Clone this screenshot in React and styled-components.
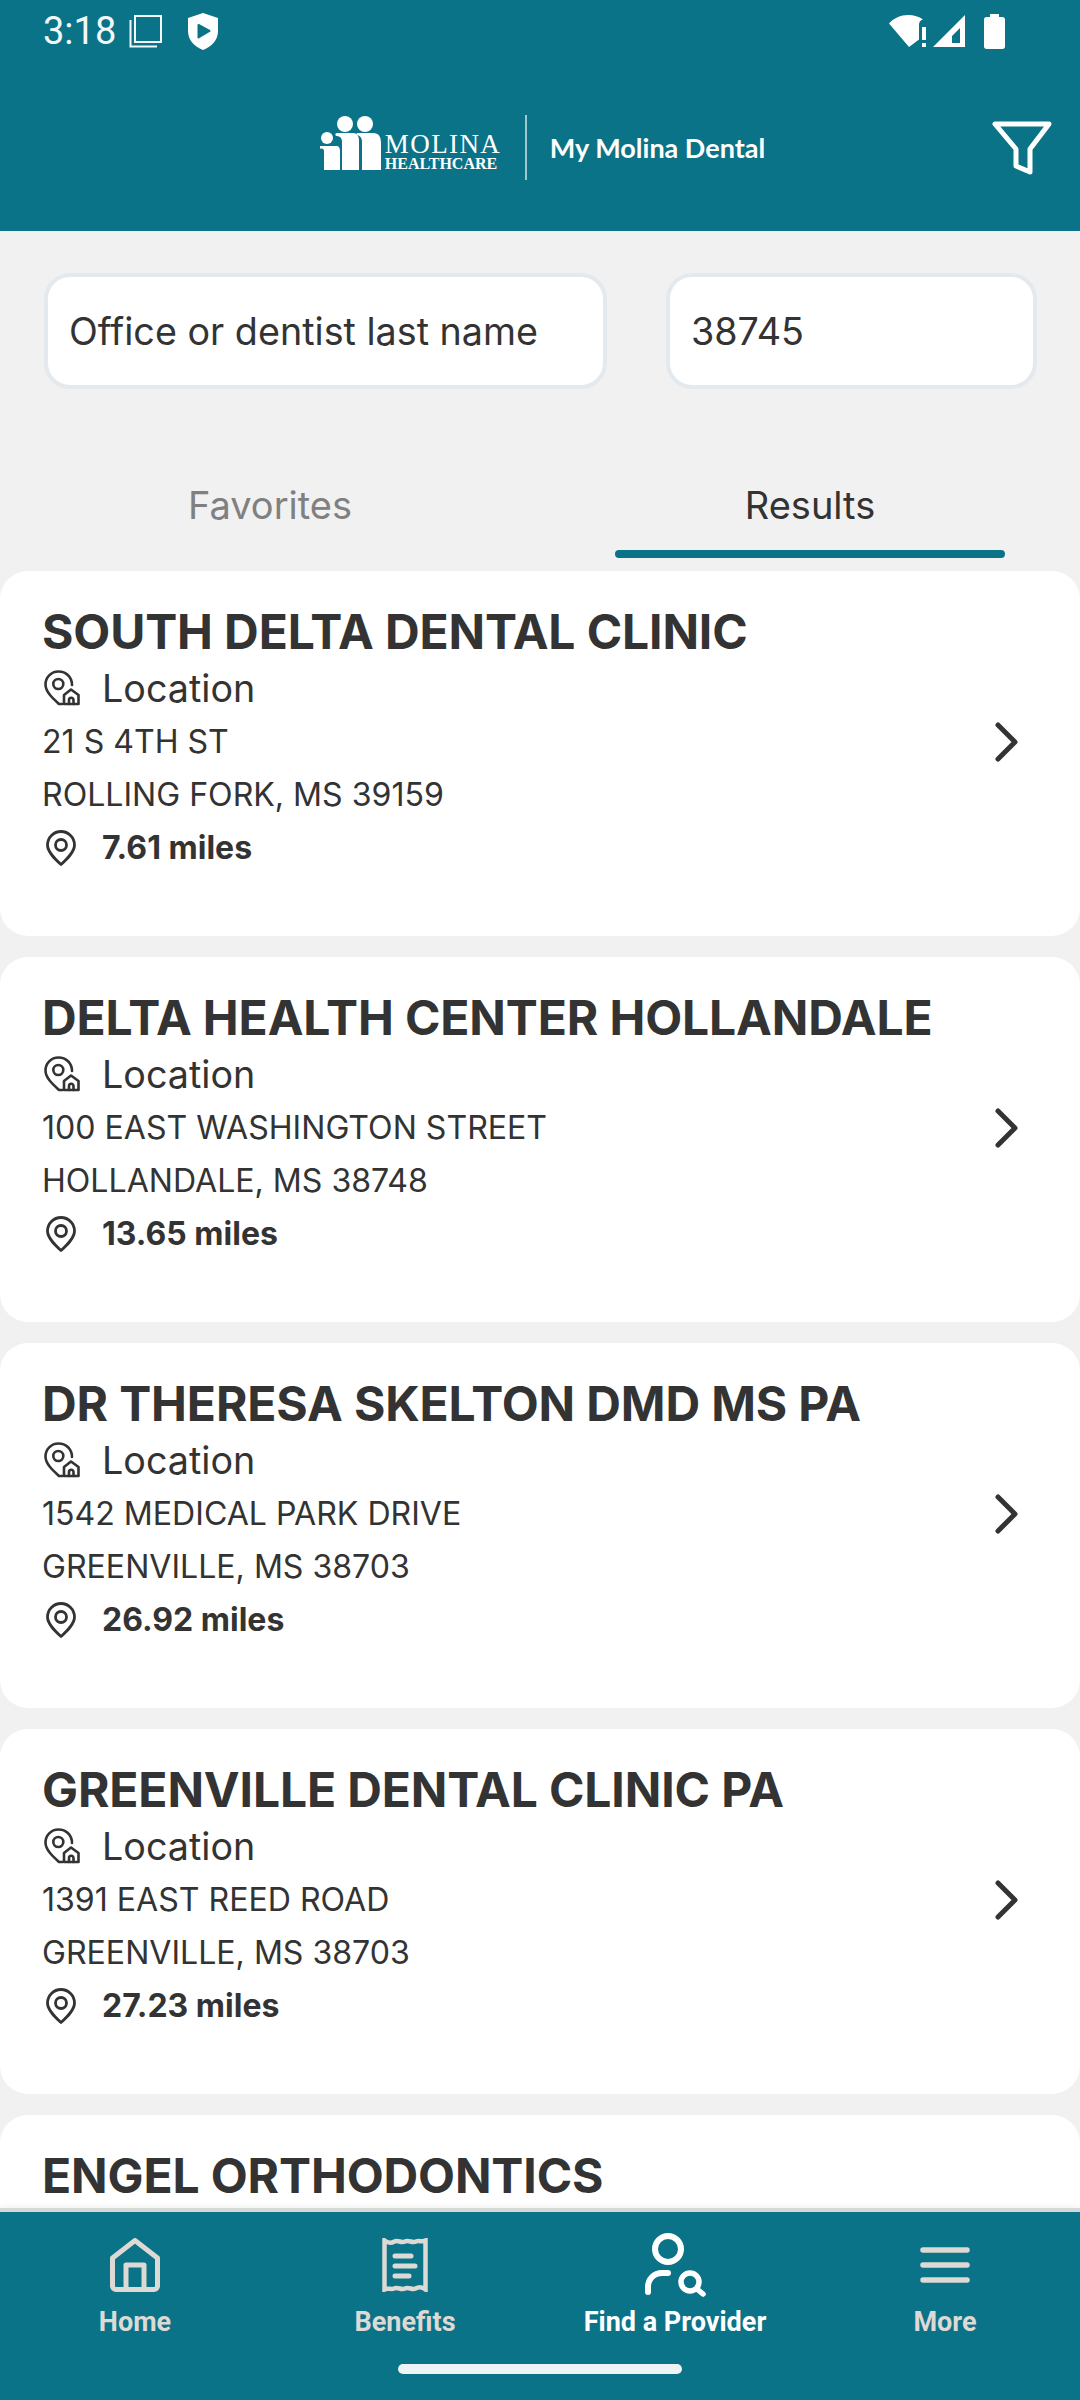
import React from "react";
import styled, { createGlobalStyle } from "styled-components";

const TEAL = "#0B7388";
const INK = "#333333";

const Global = createGlobalStyle`
  html, body { margin: 0; padding: 0; background: #F1F1F2; }
  * { box-sizing: border-box; }
  body { font-family: Inter, "Liberation Sans", sans-serif; }
`;

const Page = styled.div`
  width: 1080px; height: 2400px; display: flex; flex-direction: column; overflow: hidden; background: #F1F1F2; color: ${INK};
`;
const Header = styled.header`
  background: ${TEAL}; height: 231px; flex: none; color: #fff; display: flex; flex-direction: column;
`;
const StatusBar = styled.div`
  height: 62px; display: flex; align-items: center; padding: 0 75px 0 43px; gap: 13px;
`;
const Clock = styled.span`
  font: 400 38px/62px Roboto, sans-serif; color: #F2F8F9;
`;
const ShieldSlot = styled.span`
  display: flex; margin-left: 13px;
`;
const StatusRight = styled.div`
  margin-left: auto; display: flex; align-items: center; gap: 4px;
`;
const Toolbar = styled.div`
  display: grid; grid-template-columns: 1fr auto 1fr; align-items: center; padding: 53px 28px 0 33px;
`;
const Brand = styled.div`
  grid-column: 2; display: flex; align-items: center;
`;
const PeopleSlot = styled.span`
  display: flex; margin-bottom: 9px;
`;
const Wordmark = styled.div`
  display: flex; flex-direction: column; margin: 10px 0 0 3px; width: 112px; font-family: "Liberation Serif", serif; color: #fff;
`;
const WordTop = styled.span`
  display: block; font-size: 27px; line-height: 22px; letter-spacing: 1.4px; white-space: nowrap;
`;
const WordBottom = styled.span`
  display: block; font-size: 16px; line-height: 17px; font-weight: 700; white-space: nowrap;
`;
const Divider = styled.span`
  width: 2px; height: 65px; background: #9FC8D1; margin: 0 23px 0 28px;
`;
const AppName = styled.span`
  font: 700 27px/40px Lato, sans-serif; color: #fff; white-space: nowrap;
`;
const FilterBox = styled.div`
  grid-column: 3; justify-self: end; display: flex;
`;
const SearchRow = styled.div`
  display: flex; gap: 59px; padding: 42px 43px 0 44px; flex: none;
`;
const Field = styled.input`
  height: 116px; width: ${p => p.$w}px; flex: none; background: #fff; border: 4px solid #E4E9EE; border-radius: 26px;
  padding: 0 20px 0 21px; font: 400 37.700px Inter, sans-serif; color: ${INK}; outline: none;
`;
const Tabs = styled.div`
  display: grid; grid-template-columns: 1fr 1fr; margin-top: 86px; flex: none; height: 96px;
`;
const Tab = styled.div`
  display: flex; flex-direction: column; align-items: center; font: 400 38px/60px Inter, sans-serif;
  color: ${p => (p.$active ? INK : "#808080")};
`;
const TabBar = styled.span`
  width: 390px; height: 8px; border-radius: 4px; background: ${TEAL}; margin-top: 15px;
`;
const List = styled.main`
  flex: 1; min-height: 0; overflow: hidden; display: flex; flex-direction: column; gap: 21px;
`;
const Card = styled.article`
  flex: none; height: 365px; background: #fff; border-radius: 28px; padding: 32px 42px 0; position: relative;
  display: grid; grid-template-columns: 1fr auto;
`;
const CardBody = styled.div`
  display: flex; flex-direction: column; min-width: 0;
`;
const Title = styled.h2`
  margin: 0; font: 700 48px/58px Inter, sans-serif; color: ${INK}; white-space: nowrap; letter-spacing: -0.12px;
`;
const IconRow = styled.div`
  display: flex; align-items: center; height: 54px; width: 100%;
`;
const IconSlot = styled.span`
  width: 60px; flex: none; display: flex; padding-left: ${p => p.$pad || 0}px;
`;
const LocationLabel = styled.span`
  font: 400 37.700px/54px Inter, sans-serif;
`;
const Address = styled.div`
  font: 400 32.100px/53px Inter, sans-serif; color: ${INK};
`;
const Miles = styled.span`
  font: 700 32px/54px Inter, sans-serif;
`;
const ChevronBox = styled.div`
  display: flex; align-items: flex-start; padding-top: 118px; margin-right: 20px;
`;
const Nav = styled.nav`
  flex: none; height: 192px; background: ${TEAL}; border-top: 4px solid #D5D7D8; padding-top: 18px;
  display: flex; flex-direction: column; align-items: center; box-shadow: 0 -3px 4px rgba(0,0,0,.04); position: relative;
`;
const NavGrid = styled.div`
  width: 100%; display: grid; grid-template-columns: repeat(4, 270px);
`;
const NavItem = styled.div`
  display: flex; flex-direction: column; align-items: center; color: ${p => (p.$active ? "#FFFFFF" : "#DDD9D4")};
`;
const NavIcon = styled.span`
  height: 70px; display: flex; align-items: center; justify-content: center;
`;
const NavLabel = styled.span`
  font: 700 27px/34px Roboto, sans-serif; margin-top: 5px;
`;
const HomeBar = styled.span`
  width: 284px; height: 10px; border-radius: 5px; background: #EEF3F6; margin-top: 25px;
`;
const BatterySlot = styled.span`
  display: flex; margin-left: 14px;
`;

const CopyIcon = () => (
  <svg width="33" height="34" viewBox="0 0 33 34" fill="none" stroke="#F2F8F9" strokeWidth="2">
    <rect x="6" y="2" width="26" height="26" />
    <path d="M1.500 6V32.500H28" />
  </svg>
);
const ShieldIcon = () => (
  <svg width="30" height="37" viewBox="0 0 30 37">
    <path fill="#fff" d="M15 0L30 5V18C30 27 24 33.500 15 37C6 33.500 0 27 0 18V5Z" />
    <path fill={TEAL} d="M10.500 12L21.500 18L10.500 24.500Z" stroke={TEAL} strokeWidth="2" strokeLinejoin="round" />
  </svg>
);
const WifiIcon = () => (
  <svg width="40" height="34" viewBox="0 0 40 34">
    <path fill="#fff" d="M0 9.500C5 4 11.500 1 19 1C25 1 30 2.500 34 5.500C31 6.500 30 8 30 11V25.500L20 33Z" />
    <rect x="33" y="13" width="4" height="13" fill="#fff" />
    <rect x="33" y="29" width="4" height="4" fill="#fff" />
  </svg>
);
const SignalIcon = () => (
  <svg width="33" height="33" viewBox="0 0 33 33">
    <path fill="#fff" fillRule="evenodd" d="M32 0V32H0ZM27 13L19 21V28H27Z" />
  </svg>
);
const BatteryIcon = () => (
  <svg width="21" height="35" viewBox="0 0 21 35">
    <path fill="#fff" d="M6 0H15V3H18.500C20 3 21 4 21 5.500V32.500C21 34 20 35 18.500 35H2.500C1 35 0 34 0 32.500V5.500C0 4 1 3 2.500 3H6Z" />
  </svg>
);
const MolinaPeople = () => (
  <svg width="62" height="54" viewBox="0 0 62 54" fill="#fff">
    <circle cx="25" cy="8" r="8" />
    <circle cx="45" cy="8" r="8" />
    <circle cx="7" cy="22" r="6" />
    <path d="M0 30H16C19 30 20 32 20 35V54H4V35C4 33 2 32 0 33Z" />
    <path d="M17 17H33C37 17 39 20 39 25V54H22V26C22 22 20 20 16 20C15 19 15 17 17 17Z" />
    <path d="M37 17H53C59 17 61 21 61 27V54H42V26C42 22 40 19 36 19Z" />
  </svg>
);
const FunnelIcon = () => (
  <svg width="60" height="54" viewBox="0 0 60 54" fill="none" stroke="#fff" strokeWidth="5" strokeLinejoin="round">
    <path d="M3 3H57L38 28V51L24 45V28Z" />
  </svg>
);
const LocationIcon = () => (
  <svg width="36" height="36" viewBox="0 0 36 36" fill="none" stroke={INK} strokeWidth="2.600" strokeLinecap="round" strokeLinejoin="round">
    <path d="M28 15C28 7 22 1.500 14.500 1.500C7 1.500 1.500 7.500 1.500 14.500C1.500 22 9 28.500 15 34H18.500" />
    <circle cx="14.300" cy="14" r="5" />
    <path d="M20 25L27 19.500L34.500 25V34H20Z" />
    <path d="M25 34V30A2.200 2.200 0 0 1 29.500 30V34" />
  </svg>
);
const PinIcon = () => (
  <svg width="30" height="36" viewBox="0 0 30 36" fill="none" stroke={INK} strokeWidth="2.800" strokeLinejoin="round">
    <path d="M15 34.500C9 29 1.500 22 1.500 15A13.500 13.500 0 0 1 28.500 15C28.500 22 21 29 15 34.500Z" />
    <circle cx="15" cy="15" r="5.500" />
  </svg>
);
const Chevron = () => (
  <svg width="24" height="42" viewBox="0 0 24 42" fill="none" stroke={INK} strokeWidth="5" strokeLinecap="round" strokeLinejoin="round">
    <path d="M4 4L21 21L4 38" />
  </svg>
);
const HomeIcon = () => (
  <svg width="50" height="54" viewBox="0 0 50 54" fill="none" stroke="currentColor" strokeWidth="5" strokeLinejoin="round">
    <path d="M25 2.500L47.500 20V48A3.500 3.500 0 0 1 44 51.500H6A3.500 3.500 0 0 1 2.500 48V20Z" />
    <path d="M16 51V27H34V51" />
  </svg>
);
const BenefitsIcon = () => (
  <svg width="46" height="54" viewBox="0 0 46 54" fill="none" stroke="currentColor" strokeLinecap="round">
    <path strokeWidth="4.500" d="M2.500 2.500C6 5.500 9 5.500 12.500 3.500C16 1.500 19 5.500 23 3.500C27 1.500 30 5.500 34 3.500C37 2 40 4.500 43.500 2.500V51.500C40 48.500 37 48.500 33.500 50.500C30 52.500 27 48.500 23 50.500C19 52.500 16 48.500 12 50.500C9 52 6 49.500 2.500 51.500Z" />
    <path strokeWidth="5" d="M13 18H29M13 28H33M13 38H27" />
  </svg>
);
const FindIcon = () => (
  <svg width="70" height="70" viewBox="0 0 70 70" fill="none" stroke="currentColor" strokeLinecap="round">
    <circle cx="28" cy="19" r="13" strokeWidth="6" />
    <path strokeWidth="6" d="M8 62V57C8 49 14 43 22 43H28" />
    <circle cx="50" cy="52" r="9" strokeWidth="5.500" />
    <path strokeWidth="5.500" d="M57 59L63 64" />
  </svg>
);
const MenuIcon = () => (
  <svg width="50" height="40" viewBox="0 0 50 40" fill="none" stroke="currentColor" strokeWidth="5.500" strokeLinecap="round">
    <path d="M3 5H47M3 20H47M3 35H47" />
  </svg>
);

const providers = [
  { name: "SOUTH DELTA DENTAL CLINIC", a1: "21 S 4TH ST", a2: "ROLLING FORK, MS 39159", miles: "7.61 miles" },
  { name: "DELTA HEALTH CENTER HOLLANDALE", a1: "100 EAST WASHINGTON STREET", a2: "HOLLANDALE, MS 38748", miles: "13.65 miles" },
  { name: "DR THERESA SKELTON DMD MS PA", a1: "1542 MEDICAL PARK DRIVE", a2: "GREENVILLE, MS 38703", miles: "26.92 miles" },
  { name: "GREENVILLE DENTAL CLINIC PA", a1: "1391 EAST REED ROAD", a2: "GREENVILLE, MS 38703", miles: "27.23 miles" },
  { name: "ENGEL ORTHODONTICS", a1: "", a2: "", miles: "" },
];

const navItems = [
  { label: "Home", icon: <HomeIcon /> },
  { label: "Benefits", icon: <BenefitsIcon /> },
  { label: "Find a Provider", icon: <FindIcon />, active: true },
  { label: "More", icon: <MenuIcon /> },
];

export default function App() {
  return (
    <Page>
      <Global />
      <Header>
        <StatusBar>
          <Clock>3:18</Clock>
          <CopyIcon />
          <ShieldSlot><ShieldIcon /></ShieldSlot>
          <StatusRight>
            <WifiIcon />
            <SignalIcon />
            <BatterySlot><BatteryIcon /></BatterySlot>
          </StatusRight>
        </StatusBar>
        <Toolbar>
          <Brand>
            <PeopleSlot><MolinaPeople /></PeopleSlot>
            <Wordmark>
              <WordTop>MOLINA</WordTop>
              <WordBottom>HEALTHCARE</WordBottom>
            </Wordmark>
            <Divider />
            <AppName>My Molina Dental</AppName>
          </Brand>
          <FilterBox>
            <FunnelIcon />
          </FilterBox>
        </Toolbar>
      </Header>
      <SearchRow>
        <Field $w={563} defaultValue="Office or dentist last name" />
        <Field $w={371} defaultValue="38745" />
      </SearchRow>
      <Tabs>
        <Tab>Favorites</Tab>
        <Tab $active>
          Results
          <TabBar />
        </Tab>
      </Tabs>
      <List>
        {providers.map(p => (
          <Card key={p.name}>
            <CardBody>
              <Title>{p.name}</Title>
              {p.a1 && (
                <>
                  <IconRow>
                    <IconSlot $pad={2}><LocationIcon /></IconSlot>
                    <LocationLabel>Location</LocationLabel>
                  </IconRow>
                  <Address>{p.a1}</Address>
                  <Address>{p.a2}</Address>
                  <IconRow>
                    <IconSlot $pad={4}><PinIcon /></IconSlot>
                    <Miles>{p.miles}</Miles>
                  </IconRow>
                </>
              )}
            </CardBody>
            {p.a1 && (
              <ChevronBox>
                <Chevron />
              </ChevronBox>
            )}
          </Card>
        ))}
      </List>
      <Nav>
        <NavGrid>
          {navItems.map(n => (
            <NavItem key={n.label} $active={n.active}>
              <NavIcon>{n.icon}</NavIcon>
              <NavLabel>{n.label}</NavLabel>
            </NavItem>
          ))}
        </NavGrid>
        <HomeBar />
      </Nav>
    </Page>
  );
}
